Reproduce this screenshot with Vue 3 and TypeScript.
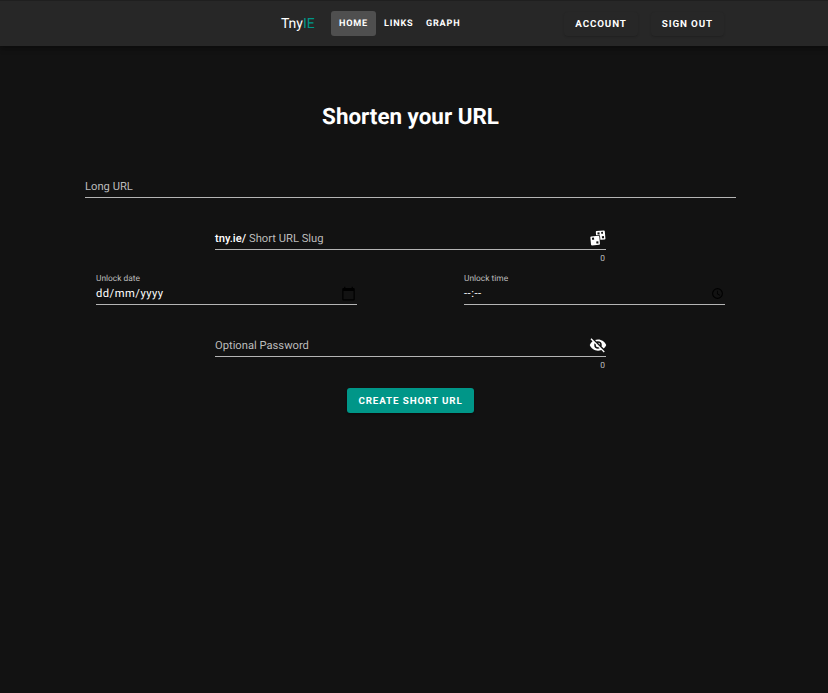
<script setup lang="ts">
const navLinks: { label: string; active: boolean }[] = [
  { label: 'HOME', active: true },
  { label: 'LINKS', active: false },
  { label: 'GRAPH', active: false },
]
const accountLinks: string[] = ['ACCOUNT', 'SIGN OUT']
</script>

<template>
  <div class="page">
    <header class="bar">
      <div class="brand">Tny<span class="accent">IE</span></div>
      <nav class="nav">
        <a v-for="l in navLinks" :key="l.label" class="nav-link" :class="{ active: l.active }">{{ l.label }}</a>
      </nav>
      <div class="account">
        <button v-for="a in accountLinks" :key="a" class="acc-btn" type="button">{{ a }}</button>
      </div>
    </header>

    <main class="main">
      <h1 class="title">Shorten your URL</h1>

      <div class="field long">
        <span class="placeholder">Long URL</span>
      </div>

      <div class="mid">
        <div class="field">
          <span class="prefix">tny.ie/</span>
          <span class="placeholder">Short URL Slug</span>
          <svg class="ficon" viewBox="0 0 24 24" width="24" height="24">
            <g transform="rotate(-5 15 7)">
              <rect x="9.500" y="1" width="12" height="12" rx="1.200" fill="#fff" />
              <rect x="11.500" y="3" width="2.800" height="2.800" fill="#121212" />
              <rect x="17" y="8.500" width="2.800" height="2.800" fill="#121212" />
              <rect x="16.500" y="2.800" width="2.400" height="2.400" fill="#121212" />
            </g>
            <g transform="rotate(-5 8 14)">
              <rect x="1.200" y="7.200" width="14" height="14" rx="1.800" fill="#121212" />
              <rect x="2.200" y="8.200" width="12" height="12" rx="1.200" fill="#fff" />
              <rect x="4.200" y="10" width="2.800" height="2.800" fill="#121212" />
              <rect x="9.500" y="15.500" width="2.800" height="2.800" fill="#121212" />
            </g>
          </svg>
        </div>
        <div class="counter">0</div>
      </div>

      <div class="dates">
        <div class="dfield">
          <span class="dlabel">Unlock date</span>
          <div class="dinput">
            <span>dd/mm/yyyy</span>
            <svg viewBox="0 0 24 24" width="15" height="15" class="dicon">
              <path fill="#000" d="M20 3h-1V1h-2v2H7V1H5v2H4c-1.100 0-2 .9-2 2v16c0 1.100.9 2 2 2h16c1.100 0 2-.9 2-2V5c0-1.100-.9-2-2-2Zm0 18H4V8h16v13Z" />
            </svg>
          </div>
        </div>
        <div class="dfield">
          <span class="dlabel">Unlock time</span>
          <div class="dinput">
            <span>--:--</span>
            <svg viewBox="0 0 24 24" width="13" height="13" class="dicon">
              <path fill="#000" d="M12 2a10 10 0 1 0 0 20 10 10 0 0 0 0-20Zm0 18a8 8 0 1 1 0-16 8 8 0 0 1 0 16Zm.500-13H11v6l5.200 3.200.8-1.300-4.500-2.700V7Z" />
            </svg>
          </div>
        </div>
      </div>

      <div class="mid pw">
        <div class="field">
          <span class="placeholder">Optional Password</span>
          <svg class="ficon eye" viewBox="0 0 24 24" width="24" height="24">
            <path fill="#fff" d="M11.830 9L15 12.160V12A3 3 0 0 0 12 9H11.830M7.530 9.800L9.080 11.350C9.030 11.560 9 11.770 9 12A3 3 0 0 0 12 15C12.220 15 12.440 14.970 12.650 14.920L14.200 16.470C13.530 16.800 12.790 17 12 17A5 5 0 0 1 7 12C7 11.210 7.200 10.470 7.530 9.800M2 4.270L4.280 6.550L4.730 7C3.080 8.300 1.780 10 1 12C2.730 16.390 7 19.500 12 19.500C13.550 19.500 15.030 19.200 16.380 18.660L16.810 19.080L19.730 22L21 20.730L3.270 3M12 7A5 5 0 0 1 17 12C17 12.640 16.870 13.260 16.640 13.820L19.570 16.750C21.070 15.500 22.270 13.860 23 12C21.270 7.610 17 4.500 12 4.500C10.600 4.500 9.260 4.750 8 5.200L10.170 7.350C10.740 7.130 11.350 7 12 7Z" />
          </svg>
        </div>
        <div class="counter">0</div>
      </div>

      <div class="actions">
        <button class="submit" type="button">CREATE SHORT URL</button>
      </div>
    </main>
  </div>
</template>

<style>
html, body { margin: 0; background: #121212; }
</style>

<style scoped>
.page {
  width: 828px;
  height: 693px;
  background: #121212;
  color: #fff;
  font-family: Roboto, "Liberation Sans", sans-serif;
  text-rendering: geometricPrecision;
  overflow: hidden;
}
.bar {
  height: 46px;
  box-sizing: border-box;
  background: #272727;
  border-top: 1px solid #1f1f1f;
  box-shadow: 0 2px 4px -1px rgba(0,0,0,.2), 0 4px 5px rgba(0,0,0,.14);
  display: flex;
  align-items: center;
  padding: 0 104px 0 281px;
}
.brand { font-size: 14px; font-weight: 400; width: 50px; color: #fff; }
.accent { color: #009688; }
.nav { display: flex; }
.nav-link {
  height: 25px;
  box-sizing: border-box;
  padding: 1px 8px 0;
  display: flex;
  align-items: center;
  font-size: 9.100px;
  font-weight: 700;
  letter-spacing: .81px;
  border-radius: 3px;
  color: #fff;
}
.nav-link:last-child { margin-left: -3.500px; }
.nav-link.active { background: #4f4f4f; }
.account { display: flex; gap: 13px; margin-left: auto; }
.acc-btn {
  height: 24px;
  padding: 0 11px;
  border: 0;
  border-radius: 4px;
  background: #272727;
  color: #fff;
  font: 700 9.800px Roboto, sans-serif;
  letter-spacing: .875px;
  box-shadow: 0 1px 2px rgba(0,0,0,.18);
}
.main { width: 651px; margin-left: 85px; }
.title {
  margin: 0;
  padding-top: 56px;
  font-size: 22.400px;
  line-height: 30px;
  font-weight: 700;
  text-align: center;
}
.field {
  position: relative;
  height: 26px;
  box-sizing: border-box;
  border-bottom: 1px solid #b4b4b4;
  padding-top: 3px;
  display: flex;
  align-items: center;
  gap: 3px;
  font-size: 11.200px;
}
.long { margin-top: 40px; }
.placeholder { color: #bcbcbc; }
.prefix { color: #fff; font-weight: 500; }
.mid { width: 391px; margin: 26px auto 0; }
.pw { margin-top: 26px; }
.ficon { position: absolute; right: -1px; top: 6px; width: 18px; height: 18px; }
.eye { top: 5px; }
.counter { text-align: right; font-size: 8.400px; color: #bcbcbc; margin-top: 4px; line-height: 10px; padding-right: 1px; }
.dates { display: flex; justify-content: space-between; padding: 0 11px; margin-top: 9px; }
.dfield { width: 261px; }
.dlabel { display: block; font-size: 8.400px; line-height: 12px; color: #bcbcbc; }
.dinput {
  height: 20px;
  box-sizing: border-box;
  border-bottom: 1px solid #b4b4b4;
  padding-bottom: 3px;
  display: flex;
  align-items: center;
  justify-content: space-between;
  font-size: 11.200px;
  letter-spacing: .5px;
  padding-right: 1px;
}
.actions { display: flex; justify-content: center; margin-top: 17px; }
.submit {
  width: 127px;
  height: 25px;
  border: 0;
  border-radius: 3px;
  background: #009688;
  color: #fff;
  font: 700 9.800px Roboto, sans-serif;
  letter-spacing: .875px;
  box-shadow: 0 2px 2px rgba(0,0,0,.25);
}
</style>
